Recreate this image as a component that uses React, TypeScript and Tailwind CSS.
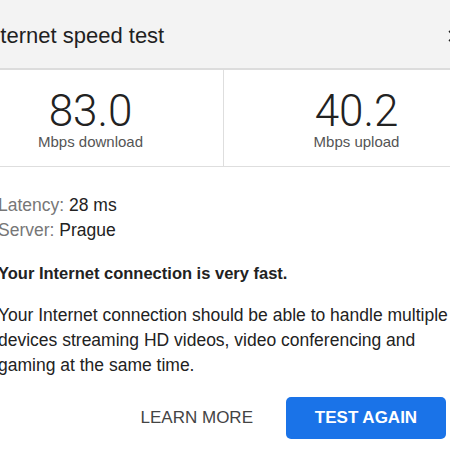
import { X } from 'lucide-react'

function Stat({ value, label }: { value: string; label: string }) {
  return (
    <div className="flex flex-1 flex-col items-center pt-[19px]">
      <span className="text-[44px] leading-none font-light text-[#222] font-['Roboto',sans-serif]">{value}</span>
      <span className="mt-[1px] text-[15px] leading-none text-[#555]">{label}</span>
    </div>
  )
}

export default function App() {
  return (
    <div className="w-[450px] h-[450px] overflow-hidden bg-white font-['Liberation_Sans',Arial,sans-serif]">
      <div className="ml-[-42px] w-[531px]">
        {/* Header */}
        <div className="flex h-[70px] items-center justify-between border-b-2 border-[#dcdcdc] bg-[#f3f3f3] pl-[24px] pr-[26px] pt-[3px]">
          <h1 className="text-[22px] leading-[28px] text-[#1f1f1f]">Internet speed test</h1>
          <X className="h-[18px] w-[18px] text-[#222]" strokeWidth={2.2} />
        </div>

        {/* Results */}
        <div className="flex h-[97px] border-b border-[#dedede]">
          <Stat value="83.0" label="Mbps download" />
          <div className="w-px bg-[#dedede]" />
          <Stat value="40.2" label="Mbps upload" />
        </div>

        {/* Details */}
        <div className="px-[40px] pt-[26px] text-[17.5px] leading-[25px] text-[#222]">
          <p>
            <span className="text-[#777]">Latency:</span> 28 ms
          </p>
          <p>
            <span className="text-[#777]">Server:</span> Prague
          </p>
          <p className="mt-[18px] font-semibold text-[16.5px]">Your Internet connection is very fast.</p>
          <p className="mt-[17px]">
            Your Internet connection should be able to handle multiple
            <br />
            devices streaming HD videos, video conferencing and
            <br />
            gaming at the same time.
          </p>
        </div>

        {/* Actions */}
        <div className="mt-[19px] flex items-center justify-end gap-[33px] pr-[43px]">
          <button className="text-[17px] text-[#444]">LEARN MORE</button>
          <button className="h-[42px] w-[160px] rounded-[5px] bg-[#1a73e8] text-[17px] font-semibold text-white">
            TEST AGAIN
          </button>
        </div>
      </div>
    </div>
  )
}
